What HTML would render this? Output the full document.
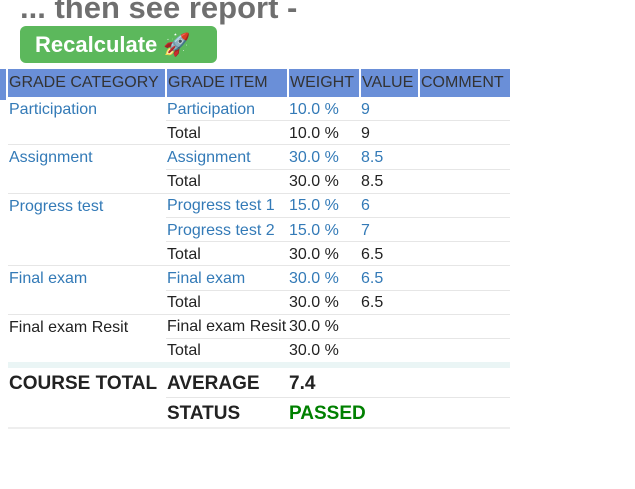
<!DOCTYPE html>
<html><head><meta charset="utf-8"><style>
body{margin:0;width:635px;height:489px;background:#fff;font-family:"Liberation Sans",sans-serif;position:relative;overflow:hidden}
h1{position:absolute;left:20px;top:-10px;margin:0;font-size:31px;font-weight:bold;color:#6f6f6f;white-space:nowrap}
.btn{position:absolute;left:20px;top:26px;width:197px;height:37px;background:#5cb85c;border-radius:6px;color:#fff;font-weight:bold;font-size:22px;line-height:37px;box-sizing:border-box;padding-left:15px;white-space:nowrap}
table{position:absolute;left:8px;top:69px;border-collapse:collapse;width:502px;font-size:16px;color:#222;table-layout:fixed}
th{background:#6a8fd8;font-weight:normal;color:#333;text-align:left;height:28px;padding:0 1px;border-left:2px solid #fff;font-size:16px;white-space:nowrap;overflow:hidden}
th:first-child{border-left:none}
td{height:21.2px;padding:2px 1px 0;vertical-align:middle;white-space:nowrap;overflow:visible}
tr.b td{border-top:1px solid #e6e6e6}
tr.s td.x{border-top:1px solid #e6e6e6}
a{color:#337ab7}
.big td{font-weight:bold;font-size:19px;height:27px}
.band td{background:#eaf5f5;height:6px;padding:0}
.g{color:#008000}
</style></head><body>
<h1>... then see report -</h1>
<div class="btn">Recalculate 🚀</div>
<div style="position:absolute;left:0;top:69px;width:6px;height:31px;background:#6a8fd8"></div>
<table>
<colgroup><col style="width:158px"><col style="width:122px"><col style="width:72px"><col style="width:59px"><col></colgroup>
<tr><th>GRADE CATEGORY</th><th>GRADE ITEM</th><th>WEIGHT</th><th>VALUE</th><th>COMMENT</th></tr>
<tr><td><a>Participation</a></td><td><a>Participation</a></td><td><a>10.0 %</a></td><td><a>9</a></td><td></td></tr>
<tr class="s"><td></td><td class="x">Total</td><td class="x">10.0 %</td><td class="x">9</td><td class="x"></td></tr>
<tr class="b"><td><a>Assignment</a></td><td><a>Assignment</a></td><td><a>30.0 %</a></td><td><a>8.5</a></td><td></td></tr>
<tr class="s"><td></td><td class="x">Total</td><td class="x">30.0 %</td><td class="x">8.5</td><td class="x"></td></tr>
<tr class="b"><td><a>Progress test</a></td><td><a>Progress test 1</a></td><td><a>15.0 %</a></td><td><a>6</a></td><td></td></tr>
<tr class="s"><td></td><td class="x"><a>Progress test 2</a></td><td class="x"><a>15.0 %</a></td><td class="x"><a>7</a></td><td class="x"></td></tr>
<tr class="s"><td></td><td class="x">Total</td><td class="x">30.0 %</td><td class="x">6.5</td><td class="x"></td></tr>
<tr class="b"><td><a>Final exam</a></td><td><a>Final exam</a></td><td><a>30.0 %</a></td><td><a>6.5</a></td><td></td></tr>
<tr class="s"><td></td><td class="x">Total</td><td class="x">30.0 %</td><td class="x">6.5</td><td class="x"></td></tr>
<tr class="b"><td>Final exam Resit</td><td>Final exam Resit</td><td>30.0 %</td><td></td><td></td></tr>
<tr class="s"><td></td><td class="x">Total</td><td class="x">30.0 %</td><td class="x"></td><td class="x"></td></tr>
<tr class="band"><td></td><td></td><td></td><td></td><td></td></tr>
<tr class="big"><td>COURSE TOTAL</td><td>AVERAGE</td><td>7.4</td><td></td><td></td></tr>
<tr class="big s"><td style="border-bottom:2px solid #eee"></td><td class="x" style="border-bottom:2px solid #eee">STATUS</td><td class="x g" style="border-bottom:2px solid #eee">PASSED</td><td class="x" style="border-bottom:2px solid #eee"></td><td class="x" style="border-bottom:2px solid #eee"></td></tr>
</table>
</body></html>
